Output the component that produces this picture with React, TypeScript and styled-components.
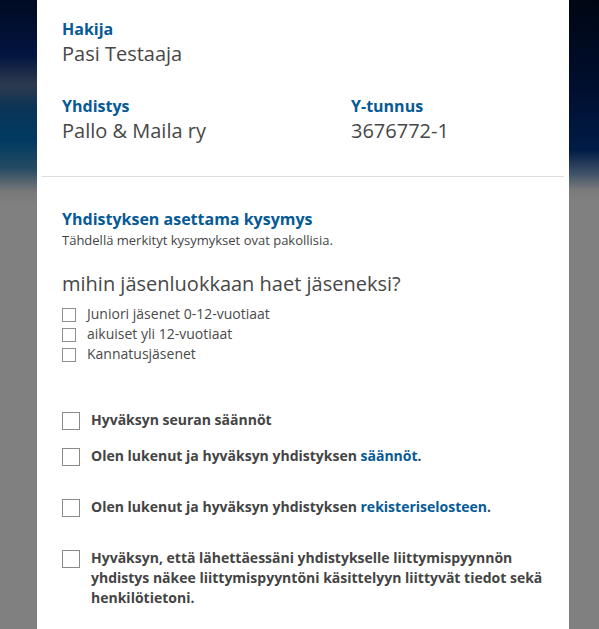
import * as React from 'react';
import styled, { createGlobalStyle } from 'styled-components';

const GlobalStyle = createGlobalStyle`
  html, body {
    margin: 0;
    padding: 0;
    background: #808080;
  }
  body {
    font-family: 'Open Sans', 'DejaVu Sans', sans-serif;
    color: #444;
  }
`;

const Page = styled.div`
  display: flex;
  min-height: 629px;
`;

const Side = styled.div<{ $side: 'left' | 'right' }>`
  flex: ${({ $side }) => ($side === 'left' ? '0 0 37px' : '1 1 auto')};
  background: ${({ $side }) =>
    $side === 'left'
      ? `linear-gradient(to bottom, #000a22 0px, #031540 55px, #2d3a4e 85px, #0b3457 108px, #003a61 140px, #254a62 168px, #797979 192px, #808080 205px)`
      : `linear-gradient(to bottom, #000713 0px, #000f30 90px, #001c46 150px, #3a4e66 172px, #7a7a7a 190px, #808080 200px)`};
`;

const Card = styled.main`
  flex: 0 0 532px;
  background: #fff;
`;

const Header = styled.section`
  display: grid;
  grid-template-columns: 289px 1fr;
  row-gap: 28px;
  padding: 19px 25px 31px;
`;

const Field = styled.div<{ $wide?: boolean }>`
  grid-column: ${({ $wide }) => ($wide ? '1 / -1' : 'auto')};
  display: flex;
  flex-direction: column;
  gap: 1px;
`;

const FieldLabel = styled.div`
  font-size: 16px;
  line-height: 20px;
  font-weight: 700;
  color: #065a95;
`;

const FieldValue = styled.div`
  font-size: 20px;
  line-height: 28px;
  color: #474747;
`;

const Divider = styled.hr`
  margin: 0 5px;
  border: 0;
  border-top: 1px solid #dedede;
`;

const Questions = styled.section`
  padding: 30px 25px 20px;
`;

const SectionTitle = styled.h2`
  margin: 0;
  font-size: 16px;
  line-height: 24px;
  font-weight: 700;
  color: #065a95;
`;

const SectionNote = styled.p`
  margin: 0;
  font-size: 13px;
  line-height: 18px;
  color: #444;
`;

const Question = styled.h3`
  margin: 21px 0 6px;
  font-size: 20px;
  line-height: 28px;
  font-weight: 400;
  color: #474747;
`;

const OptionList = styled.div`
  display: flex;
  flex-direction: column;
`;

const Option = styled.label`
  display: flex;
  align-items: center;
  gap: 11px;
  font-size: 14px;
  line-height: 20px;
  color: #4a4a4a;
`;

const SmallBox = styled.span`
  flex: 0 0 auto;
  width: 14px;
  height: 14px;
  margin-top: 1px;
  box-sizing: border-box;
  border: 1px solid #8f8f8f;
  background: #fff;
`;

const Consent = styled.label<{ $gap: number }>`
  display: flex;
  align-items: flex-start;
  gap: 11px;
  margin-top: ${({ $gap }) => $gap}px;
  font-size: 14px;
  line-height: 20px;
  font-weight: 700;
  color: #444;
`;

const BigBox = styled.span`
  flex: 0 0 auto;
  width: 18px;
  height: 18px;
  margin-top: 2px;
  box-sizing: border-box;
  border: 1px solid #8a8a8a;
  background: #fff;
`;

const Link = styled.a`
  color: #065a95;
  text-decoration: none;
`;

const ConsentList = styled.div`
  display: flex;
  flex-direction: column;
  margin-top: 26px;
`;

export default function App() {
  return (
    <>
      <GlobalStyle />
      <Page>
        <Side $side="left" />
        <Card>
          <Header>
            <Field $wide>
              <FieldLabel>Hakija</FieldLabel>
              <FieldValue>Pasi Testaaja</FieldValue>
            </Field>
            <Field>
              <FieldLabel>Yhdistys</FieldLabel>
              <FieldValue>Pallo &amp; Maila ry</FieldValue>
            </Field>
            <Field>
              <FieldLabel>Y-tunnus</FieldLabel>
              <FieldValue>3676772-1</FieldValue>
            </Field>
          </Header>
          <Divider />
          <Questions>
            <SectionTitle>Yhdistyksen asettama kysymys</SectionTitle>
            <SectionNote>Tähdellä merkityt kysymykset ovat pakollisia.</SectionNote>
            <Question>mihin jäsenluokkaan haet jäseneksi?</Question>
            <OptionList>
              <Option><SmallBox />Juniori jäsenet 0-12-vuotiaat</Option>
              <Option><SmallBox />aikuiset yli 12-vuotiaat</Option>
              <Option><SmallBox />Kannatusjäsenet</Option>
            </OptionList>
            <ConsentList>
              <Consent $gap={20}>
                <BigBox />
                <span>Hyväksyn seuran säännöt</span>
              </Consent>
              <Consent $gap={16}>
                <BigBox />
                <span>Olen lukenut ja hyväksyn yhdistyksen <Link href="#">säännöt</Link>.</span>
              </Consent>
              <Consent $gap={31}>
                <BigBox />
                <span>Olen lukenut ja hyväksyn yhdistyksen <Link href="#">rekisteriselosteen</Link>.</span>
              </Consent>
              <Consent $gap={31}>
                <BigBox />
                <span>
                  Hyväksyn, että lähettäessäni yhdistykselle liittymispyynnön yhdistys näkee
                  liittymispyyntöni käsittelyyn liittyvät tiedot sekä henkilötietoni.
                </span>
              </Consent>
            </ConsentList>
          </Questions>
        </Card>
        <Side $side="right" />
      </Page>
    </>
  );
}
